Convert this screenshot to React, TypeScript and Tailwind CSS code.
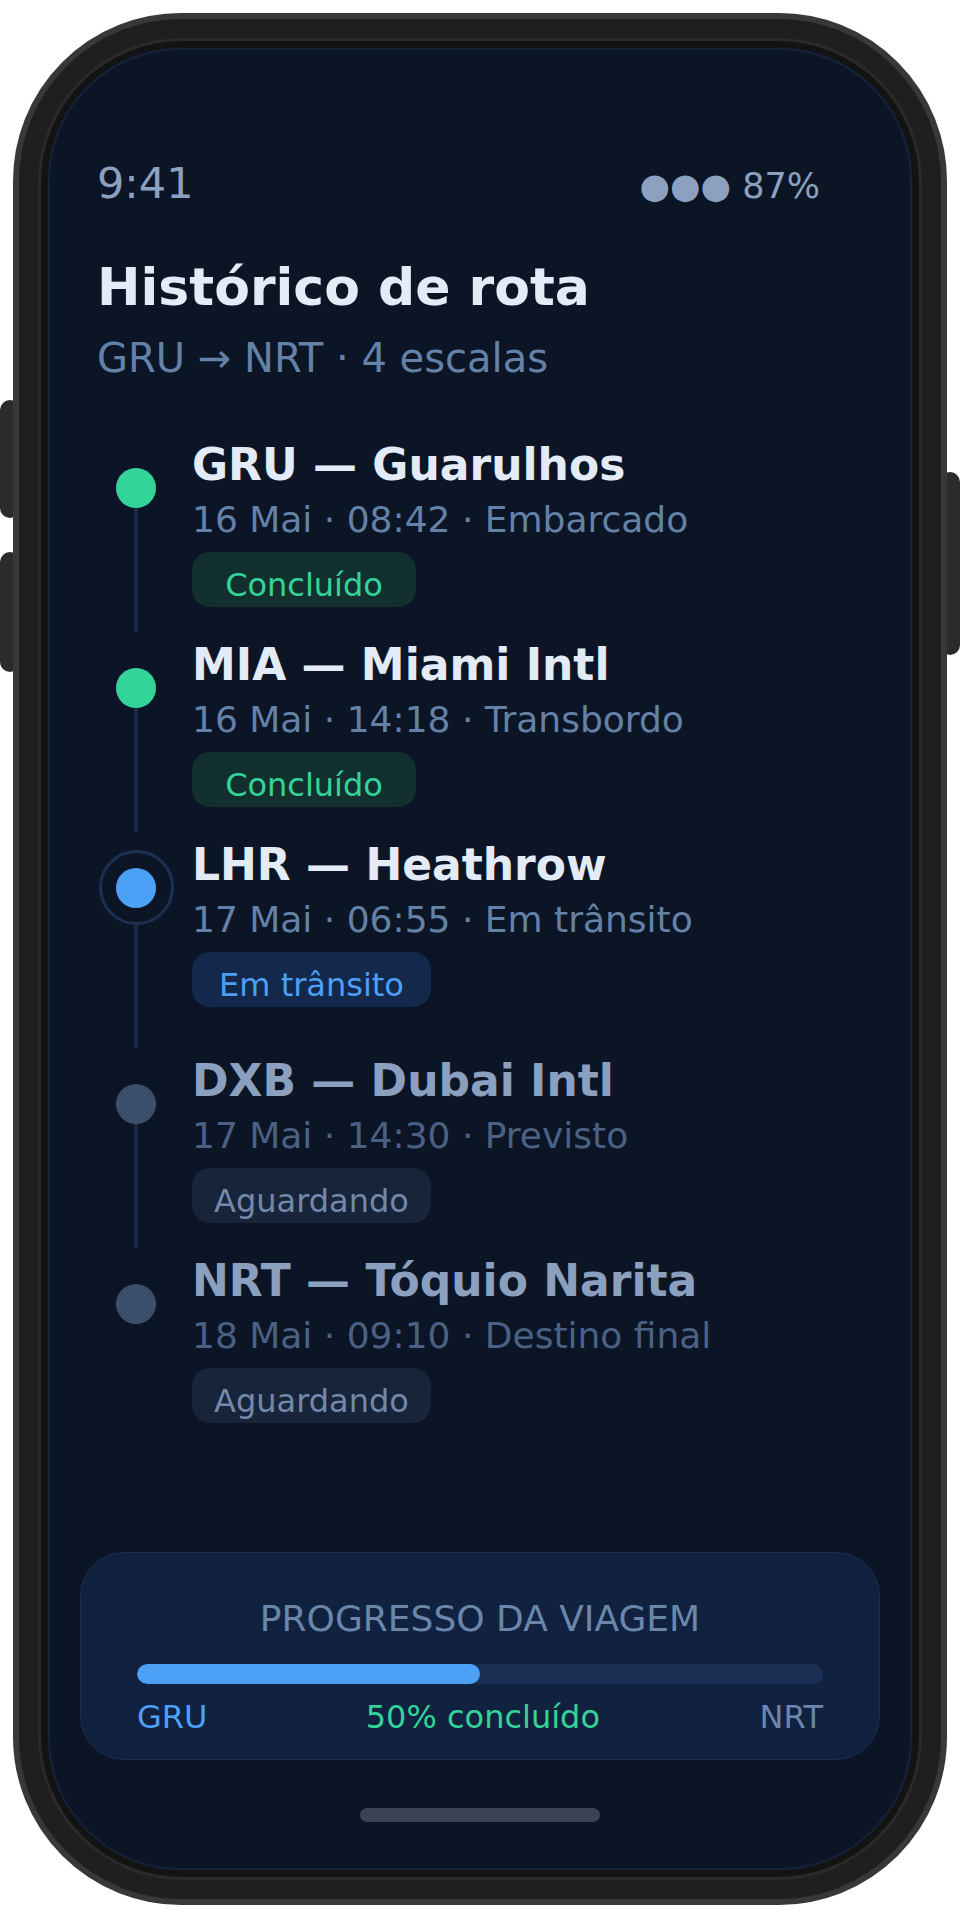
const stops = [
  {
    code: 'GRU — Guarulhos',
    meta: '16 Mai · 08:42 · Embarcado',
    badge: 'Concluído',
    state: 'done',
  },
  {
    code: 'MIA — Miami Intl',
    meta: '16 Mai · 14:18 · Transbordo',
    badge: 'Concluído',
    state: 'done',
  },
  {
    code: 'LHR — Heathrow',
    meta: '17 Mai · 06:55 · Em trânsito',
    badge: 'Em trânsito',
    state: 'active',
  },
  {
    code: 'DXB — Dubai Intl',
    meta: '17 Mai · 14:30 · Previsto',
    badge: 'Aguardando',
    state: 'next',
  },
  {
    code: 'NRT — Tóquio Narita',
    meta: '18 Mai · 09:10 · Destino final',
    badge: 'Aguardando',
    state: 'next',
  },
];

function Stop({ stop, last }: { stop: (typeof stops)[number]; last: boolean }) {
  const active = stop.state === 'active';
  const done = stop.state === 'done';

  return (
    <div className="flex">
      {/* Dot + line */}
      <div
        className={`w-[78px] flex flex-col items-center pb-[5px] ${
          active ? 'pt-[13px]' : 'pt-[31px]'
        }`}
      >
        {active ? (
          <div className="w-[75px] h-[75px] rounded-full border-[3px] border-[#1c3152] flex items-center justify-center">
            <div className="w-[40px] h-[40px] rounded-full bg-[#4ca0f6]" />
          </div>
        ) : (
          <div
            className={`w-[40px] h-[40px] rounded-full ${
              done ? 'bg-[#34d399]' : 'bg-[#3b4e6c]'
            }`}
          />
        )}
        {!last && <div className="w-[4px] flex-1 bg-[#1a2a45]" />}
      </div>

      {/* Content */}
      <div className={`ml-[17px] ${active ? 'pb-[46px]' : 'pb-[30px]'}`}>
        <div
          className={`text-[44px] leading-[56px] font-bold ${
            stop.state === 'next' ? 'text-[#8ba0bf]' : 'text-[#e3ebf6]'
          }`}
        >
          {stop.code}
        </div>
        <div
          className={`mt-[5px] text-[36px] leading-[44px] ${
            stop.state === 'next' ? 'text-[#4a6184]' : 'text-[#6482a7]'
          }`}
        >
          {stop.meta}
        </div>
        <div
          className={`mt-[10px] h-[55px] pt-[10px] rounded-[18px] flex items-center justify-center text-[32px] ${
            done
              ? 'w-[224px] bg-[#12302f] text-[#34d399]'
              : active
                ? 'w-[239px] bg-[#13284a] text-[#4ca0f6]'
                : 'w-[239px] bg-[#17243a] text-[#7389a9]'
          }`}
        >
          {stop.badge}
        </div>
      </div>
    </div>
  );
}

export default function App() {
  return (
    <div className="relative w-[960px] h-[1920px] bg-white p-[13px] font-['DejaVu_Sans',sans-serif]">
      {/* Side buttons */}
      <div className="absolute left-0 top-[400px] w-[20px] h-[118px] rounded-[10px] bg-[#2b2b2d]" />
      <div className="absolute left-0 top-[552px] w-[20px] h-[120px] rounded-[10px] bg-[#2b2b2d]" />
      <div className="absolute right-0 top-[472px] w-[20px] h-[183px] rounded-[10px] bg-[#2b2b2d]" />

      {/* Phone body */}
      <div className="relative w-[934px] h-[1892px] rounded-[168px] bg-[#1f1f1f] border-[6px] border-[#383838] p-[19px]">
        <div className="w-full h-full rounded-[144px] border-[3px] border-[#2a2a2a] bg-[#131313] p-[7px]">
          {/* Screen */}
          <div className="w-full h-full rounded-[132px] border-2 border-[#15233a] bg-[#0c1526] flex flex-col overflow-hidden">
            <div className="px-[47px] pt-[109px]">
              {/* Status bar */}
              <div className="flex items-baseline justify-between pr-[43px] text-[#8ca1c0]">
                <span className="text-[43px] leading-[48px]">9:41</span>
                <span className="text-[35px] leading-[48px]">●●● 87%</span>
              </div>

              {/* Header */}
              <h1 className="mt-[45px] text-[52px] leading-[64px] font-bold text-[#e3ebf6]">
                Histórico de rota
              </h1>
              <p className="mt-[15px] text-[40px] leading-[48px] text-[#6482a7]">
                GRU → NRT · 4 escalas
              </p>

              {/* Timeline */}
              <div className="mt-[55px]">
                {stops.map((stop, i) => (
                  <Stop key={stop.code} stop={stop} last={i === stops.length - 1} />
                ))}
              </div>
            </div>

            {/* Progress card */}
            <div className="mt-auto mx-[30px] h-[208px] rounded-[44px] border border-[#1b2f52] bg-[#112140] px-[56px] pt-[44px]">
              <div className="text-center text-[36px] leading-[44px] text-[#6a87ab]">
                PROGRESSO DA VIAGEM
              </div>
              <div className="mt-[23px] h-[20px] rounded-full bg-[#1b3054] overflow-hidden">
                <div className="h-full rounded-full bg-[#4ca0f6]" style={{ width: '50%' }} />
              </div>
              <div className="mt-[14px] grid grid-cols-3 text-[32px] leading-[38px]">
                <span className="text-left text-[#4ca0f6]">GRU</span>
                <span className="text-center whitespace-nowrap text-[#34d399]">50% concluído</span>
                <span className="text-right text-[#6a87ab]">NRT</span>
              </div>
            </div>

            {/* Home indicator */}
            <div className="mt-[48px] mb-[46px] mx-auto w-[240px] h-[14px] rounded-full bg-[#3a4454]" />
          </div>
        </div>
      </div>
    </div>
  );
}
